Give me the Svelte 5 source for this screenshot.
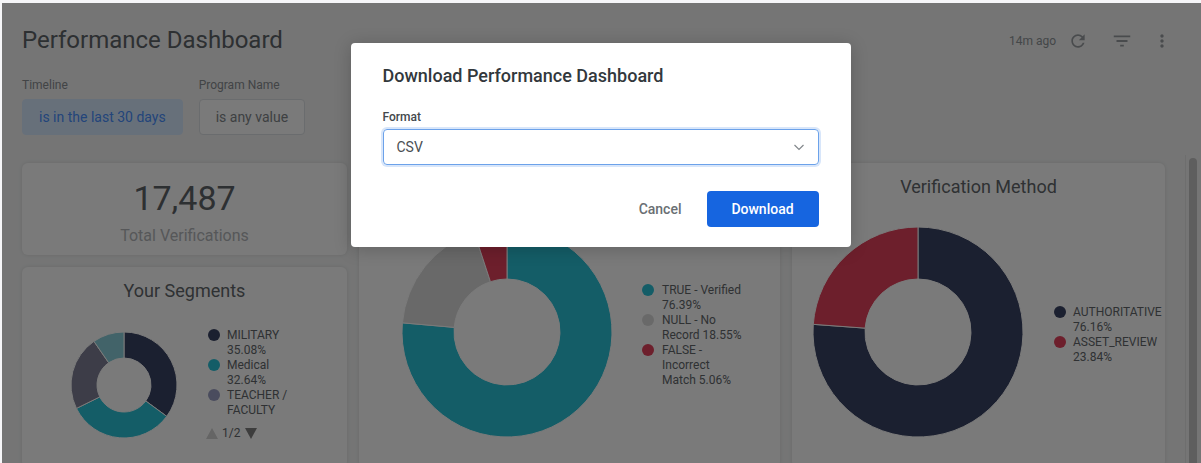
<script>
	const navy = '#3a4364';
	const teal = '#2ac2d8';
	const slate = '#7f8196';
	const pale = '#8ad0db';
	const grey = '#dcdcdc';
	const red = '#e4415c';

	const segments = [
		{ value: 35.08, color: navy },
		{ value: 32.64, color: teal },
		{ value: 22.68, color: slate },
		{ value: 9.6, color: pale }
	];
	const segmentLegend = [
		{ label: 'MILITARY 35.08%', color: navy },
		{ label: 'Medical 32.64%', color: teal },
		{ label: 'TEACHER / FACULTY', color: '#9ca0c4' }
	];
	const status = [
		{ value: 76.39, label: 'TRUE - Verified 76.39%', color: teal },
		{ value: 18.55, label: 'NULL - No Record 18.55%', color: grey },
		{ value: 5.06, label: 'FALSE - Incorrect Match 5.06%', color: red }
	];
	const method = [
		{ value: 76.16, label: 'AUTHORITATIVE 76.16%', color: navy },
		{ value: 23.84, label: 'ASSET_REVIEW 23.84%', color: red }
	];

	// donut slices start at 12 o'clock and go clockwise
	function slices(data, r, inner) {
		let start = 0;
		return data.map((d) => {
			const end = start + d.value / 100;
			const pt = (t, rad) => {
				const a = t * 2 * Math.PI;
				return `${(rad * Math.sin(a)).toFixed(2)} ${(-rad * Math.cos(a)).toFixed(2)}`;
			};
			const large = end - start > 0.5 ? 1 : 0;
			const path = `M${pt(start, r)}A${r} ${r} 0 ${large} 1 ${pt(end, r)}L${pt(end, inner)}A${inner} ${inner} 0 ${large} 0 ${pt(start, inner)}Z`;
			start = end;
			return { path, color: d.color };
		});
	}
</script>

{#snippet donut(data, r, inner)}
	<svg class="donut" width={r * 2 + 2} height={r * 2 + 2} viewBox="{-r - 1} {-r - 1} {r * 2 + 2} {r * 2 + 2}">
		{#each slices(data, r, inner) as s}
			<path d={s.path} fill={s.color} stroke="#fff" stroke-width="1" />
		{/each}
	</svg>
{/snippet}

{#snippet legend(items)}
	{#each items as item}
		<div class="legend-item">
			<span class="dot" style="background: {item.color}"></span>
			<span class="legend-label">{item.label}</span>
		</div>
	{/each}
{/snippet}

<div class="app">
	<div class="screen">
		<header class="top">
			<h1>Performance Dashboard</h1>
			<div class="actions">
				<span class="ago">14m ago</span>
				<svg class="refresh" width="20" height="20" viewBox="0 0 24 24"><path d="M17.65 6.35C16.2 4.9 14.21 4 12 4c-4.42 0-7.99 3.58-7.99 8s3.57 8 7.99 8c3.73 0 6.84-2.55 7.73-6h-2.08c-.82 2.33-3.04 4-5.65 4-3.31 0-6-2.69-6-6s2.69-6 6-6c1.66 0 3.14.69 4.22 1.78L13 11h7V4l-2.35 2.35z" /></svg>
				<svg class="filter" width="22" height="22" viewBox="0 0 24 24"><path d="M10 18h4v-2h-4v2zM3 6v2h18V6H3zm3 7h12v-2H6v2z" /></svg>
				<svg class="more" width="20" height="20" viewBox="0 0 24 24"><path d="M12 8c1.1 0 2-.9 2-2s-.9-2-2-2-2 .9-2 2 .9 2 2 2zm0 2c-1.1 0-2 .9-2 2s.9 2 2 2 2-.9 2-2-.9-2-2-2zm0 6c-1.1 0-2 .9-2 2s.9 2 2 2 2-.9 2-2-.9-2-2-2z" /></svg>
			</div>
		</header>

		<div class="filters">
			<div class="field">
				<span class="field-label">Timeline</span>
				<div class="chip active">is in the last 30 days</div>
			</div>
			<div class="field">
				<span class="field-label">Program Name</span>
				<div class="chip">is any value</div>
			</div>
		</div>

		<div class="grid">
			<section class="card total">
				<div class="big">17,487</div>
				<div class="sub">Total Verifications</div>
			</section>

			<section class="card chart tall">
				<div class="card-title"></div>
				<div class="chart-body wide">
					{@render donut(status, 105, 53)}
					<div class="legend">{@render legend(status)}</div>
				</div>
			</section>

			<section class="card chart tall">
				<div class="card-title">Verification Method</div>
				<div class="chart-body">
					{@render donut(method, 105, 53)}
					<div class="legend">{@render legend(method)}</div>
				</div>
			</section>

			<section class="card chart small">
				<div class="card-title">Your Segments</div>
				<div class="chart-body">
					{@render donut(segments, 53, 27)}
					<div class="legend">
						{@render legend(segmentLegend)}
						<div class="pager">
							<span class="arrow up"></span>
							<span>1/2</span>
							<span class="arrow down"></span>
						</div>
					</div>
				</div>
			</section>
		</div>

		<div class="scrollbar"><div class="thumb"></div></div>
	</div>

	<div class="overlay">
		<div class="modal">
			<h2>Download Performance Dashboard</h2>
			<span class="format-label">Format</span>
			<div class="select">
				<span>CSV</span>
				<svg width="12" height="12" viewBox="0 0 12 12"><path d="M1.5 4l4.5 4.5L10.500 4" fill="none" stroke="#82878b" stroke-width="1.2" /></svg>
			</div>
			<div class="buttons">
				<button class="cancel">Cancel</button>
				<button class="download">Download</button>
			</div>
		</div>
	</div>
</div>

<style>
	:global(body) { margin: 0; }
	.app { position: relative; width: 1201px; height: 463px; overflow: hidden; background: #f6f6f8; font-family: Roboto, sans-serif; color: #5f6368; }
	.screen { position: relative; height: 460px; margin: 3px 0 0 2px; padding: 0 20px; background: #f4f5f5; overflow: hidden; }

	.top { display: flex; justify-content: space-between; align-items: center; height: 30px; padding-top: 22px; }
	h1 { margin: 0; font-size: 24px; font-weight: 400; color: #5f6469; }
	.actions { display: flex; align-items: center; margin-top: 2px; margin-right: 9px; }
	.ago { font-size: 12px; margin-right: 12px; color: #8f9498; }
	.actions svg { fill: #9a9ea2; }
	.refresh { margin-right: 23px; }
	.filter { margin-right: 19px; }

	.filters { display: flex; gap: 16px; margin-top: 23px; }
	.field { display: flex; flex-direction: column; gap: 6px; }
	.field-label { font-size: 12px; line-height: 15px; color: #8a8e92; }
	.chip { box-sizing: border-box; height: 36px; padding: 0 16px; display: flex; align-items: center; font-size: 14px; border: 1px solid #dee1e5; border-radius: 4px; color: #82878b; background: #fff; }
	.chip.active { background: #d8ebff; border-color: #d8ebff; color: #4a90ff; }

	.grid { display: grid; grid-template-columns: 325px 421px 373px; grid-template-rows: 92px 200px; gap: 12px; margin-top: 28px; }
	.card { background: #fff; border-radius: 6px; box-shadow: 0 0 4px rgba(0, 0, 0, 0.1); }
	.total { text-align: center; padding-top: 14px; box-sizing: border-box; }
	.big { font-size: 34px; line-height: 42px; color: #5f6469; }
	.sub { font-size: 16px; line-height: 19px; margin-top: 7px; color: #b4b7ba; }
	.tall { grid-row: span 2; }
	.small { grid-column: 1; grid-row: 2; }
	.card-title { height: 63px; padding-top: 13px; box-sizing: border-box; text-align: center; font-size: 18px; line-height: 21px; color: #63686c; }
	.small .card-title { height: 61px; }
	.chart-body { display: flex; justify-content: center; align-items: center; gap: 30px; }
	.chart-body.wide { gap: 29px; }
	.legend { width: 91px; font-size: 12px; line-height: 15px; color: #63686c; }
	.tall .legend { margin-top: 6px; }
	.wide .legend { width: 96px; }
	.legend-item { display: flex; gap: 7px; }
	.wide .legend-item { gap: 8px; }
	.dot { flex: none; width: 12px; height: 12px; margin-top: 1px; border-radius: 50%; }
	.legend-label { width: 80px; flex: none; }
	.pager { display: flex; align-items: center; gap: 4px; margin-top: 8px; margin-left: -2px; font-size: 12px; line-height: 15px; }
	.arrow { width: 0; height: 0; border-left: 6px solid transparent; border-right: 6px solid transparent; }
	.arrow.up { border-bottom: 11px solid #d3d3d3; }
	.arrow.down { border-top: 11px solid #808080; margin-left: 1px; }

	.scrollbar { position: absolute; top: 152px; right: 0; width: 16px; bottom: 0; box-sizing: border-box; border-left: 1px solid #e6e6e6; background: #f4f4f4; }
	.thumb { width: 8px; height: 400px; margin: 3px 0 0 3px; border-radius: 4px; background: #c4c4c4; }

	.overlay { position: absolute; inset: 3px 0 0 2px; display: flex; justify-content: center; padding-top: 40px; padding-right: 2px; background: rgba(0, 0, 0, 0.52); }
	.modal { box-sizing: border-box; width: 500px; height: 204px; padding: 22px 32px 20px; background: #fff; border-radius: 4px; box-shadow: 0 2px 18px rgba(0, 0, 0, 0.2); }
	h2 { margin: 0; font-size: 18px; line-height: 21px; font-weight: 500; color: #32383c; }
	.format-label { display: block; margin-top: 24px; font-size: 12px; line-height: 14px; font-weight: 500; color: #43484c; }
	.select { box-sizing: border-box; height: 36px; margin-top: 5px; padding: 0 13px 0 13px; display: flex; justify-content: space-between; align-items: center; font-size: 14px; color: #4a4f53; border: 1px solid #6ca2ea; border-radius: 4px; box-shadow: 0 0 0 2px #d8e6fa; }
	.buttons { display: flex; justify-content: flex-end; align-items: center; gap: 25px; margin-top: 26px; }
	button { font-family: inherit; font-size: 14px; font-weight: 500; border: none; padding: 0; background: none; }
	.cancel { color: #6a6f73; }
	.download { width: 112px; height: 36px; border-radius: 4px; color: #fff; background: #1665e0; }
</style>
